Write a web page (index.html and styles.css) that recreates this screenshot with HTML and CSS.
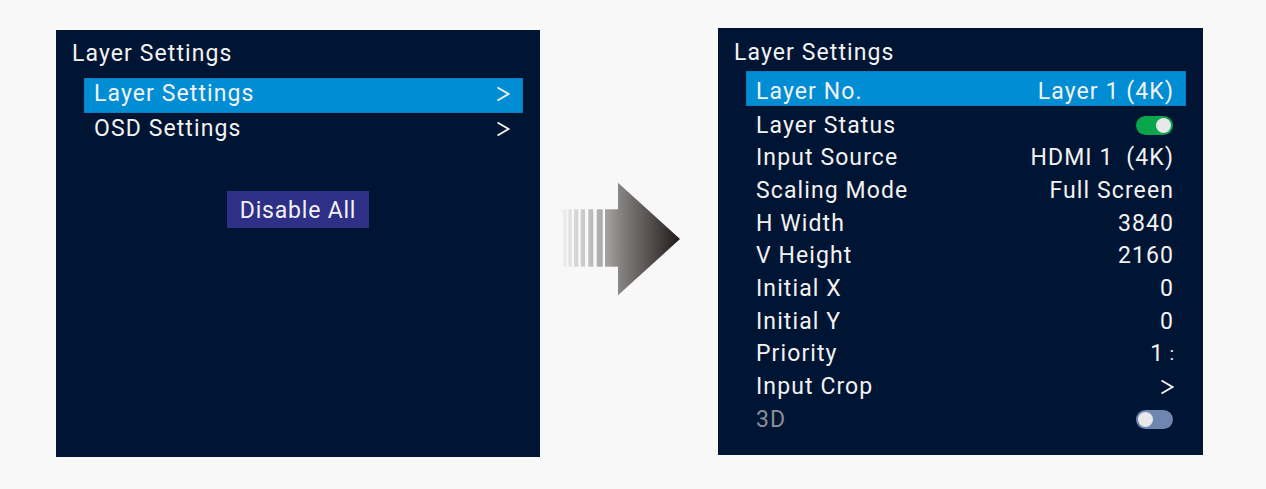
FILE: index.html
```html
<!DOCTYPE html>
<html lang="en">
<head>
<meta charset="utf-8">
<title>Layer Settings</title>
<link rel="stylesheet" href="styles.css">
</head>
<body>
<div class="stage">
  <section class="panel panel-left">
    <div class="title">Layer Settings</div>
    <ul class="menu">
      <li class="mrow active"><span>Layer Settings</span><svg class="chev" viewBox="0 0 14 16"><polyline points="1.5,1.5 12.5,8 1.5,14.5"/></svg></li>
      <li class="mrow"><span>OSD Settings</span><svg class="chev" viewBox="0 0 14 16"><polyline points="1.5,1.5 12.5,8 1.5,14.5"/></svg></li>
    </ul>
    <div class="btn">Disable All</div>
  </section>

  <svg class="arrow" width="118" height="114" viewBox="0 0 118 114">
    <defs>
      <linearGradient id="ag" x1="0" y1="0" x2="118" y2="0" gradientUnits="userSpaceOnUse">
        <stop offset="0" stop-color="#f0f0f0"/>
        <stop offset="0.35" stop-color="#a8a6a6"/>
        <stop offset="0.5" stop-color="#858181"/>
        <stop offset="1" stop-color="#221a1a"/>
      </linearGradient>
    </defs>
    <g fill="url(#ag)">
      <rect x="0.7" y="27.3" width="4" height="57.4"/>
      <rect x="6.3" y="27.3" width="3.4" height="57.4"/>
      <rect x="12" y="27.3" width="4.3" height="57.4"/>
      <rect x="18.7" y="27.3" width="4.3" height="57.4"/>
      <rect x="26.3" y="27.3" width="5" height="57.4"/>
      <rect x="34.7" y="27.3" width="6" height="57.4"/>
      <rect x="43" y="27.3" width="14" height="57.4"/>
      <polygon points="56,0.7 118,57 56,113.3"/>
    </g>
  </svg>

  <section class="panel panel-right">
    <div class="title">Layer Settings</div>
    <ul class="list">
      <li class="row active"><span>Layer No.</span><span>Layer 1 (4K)</span></li>
      <li class="row"><span>Layer Status</span><span class="toggle on"></span></li>
      <li class="row"><span>Input Source</span><span>HDMI 1&ensp;(4K)</span></li>
      <li class="row"><span>Scaling Mode</span><span>Full Screen</span></li>
      <li class="row"><span>H Width</span><span>3840</span></li>
      <li class="row"><span>V Height</span><span>2160</span></li>
      <li class="row"><span>Initial X</span><span>0</span></li>
      <li class="row"><span>Initial Y</span><span>0</span></li>
      <li class="row"><span>Priority</span><span>1<span class="dots">:</span></span></li>
      <li class="row"><span>Input Crop</span><svg class="chev" viewBox="0 0 14 16"><polyline points="1.5,1.5 12.5,8 1.5,14.5"/></svg></li>
      <li class="row disabled"><span>3D</span><span class="toggle off"></span></li>
    </ul>
  </section>
</div>
</body>
</html>
```

FILE: styles.css
```css
* { box-sizing: border-box; }
html, body { margin: 0; padding: 0; }
body {
  background: #f8f8f8;
  width: 1266px;
  height: 489px;
  overflow: hidden;
  font-family: Roboto, "Noto Sans", "Liberation Sans", sans-serif;
  color: #f2f2f2;
}
.stage {
  display: flex;
  align-items: flex-start;
  padding: 28px 0 0 56px;
}
.panel {
  background: #001433;
  height: 427px;
  font-size: 23px;
  letter-spacing: 1.1px;
  display: flex;
  flex-direction: column;
}
.panel-left {
  width: 484px;
  margin-top: 2px;
  padding: 9px 0 0 16px;
}
.panel-right {
  width: 485px;
  margin-left: 38px;
  padding: 9.5px 0 0 16px;
}
.title {
  line-height: 30px;
  height: 30px;
  white-space: nowrap;
}
ul { list-style: none; margin: 0; padding: 0; }

.menu {
  margin: 9px 0 0 12px;
  width: 439px;
}
.mrow {
  height: 35px;
  line-height: 32px;
  padding: 0 13px 3px 10px;
  display: flex;
  justify-content: space-between;
  align-items: center;
}
.mrow.active { background: #008dd3; box-shadow: inset 0 0 0 1px #0a7cc0; }
.chev {
  width: 14px;
  height: 16px;
  fill: none;
  stroke: #f2f2f2;
  stroke-width: 1.8;
  flex: none;
}
.btn {
  align-self: center;
  margin: 43px 0 0 -16px;
  width: 142px;
  height: 37px;
  line-height: 35px;
  padding-top: 2px;
  text-align: center;
  background: #2e2f86;
  letter-spacing: 0.8px;
}

.arrow {
  flex: none;
  margin: 154px 0 0 22px;
}

.list {
  margin: 3.5px 0 0 12px;
  width: 440px;
}
.row {
  height: 32.7px;
  padding: 5.5px 12px 0 10px;
  line-height: 27.2px;
  display: flex;
  justify-content: space-between;
  align-items: center;
  white-space: nowrap;
}
.row.active {
  height: 35px;
  padding-top: 6px;
  line-height: 29px;
  background: #008dd3;
  box-shadow: inset 0 0 0 1px #0a7cc0;
}
.row.disabled { color: #8a8e98; }
.dots {
  font-size: 19px;
  margin-left: 5px;
  letter-spacing: 0;
  position: relative;
  top: -1px;
}
.toggle {
  position: relative;
  width: 37px;
  height: 19px;
  border-radius: 10px;
  margin-right: 1px;
}
.toggle::after {
  content: "";
  position: absolute;
  top: 2px;
  width: 15px;
  height: 15px;
  border-radius: 50%;
  background: #e8e8ea;
}
.toggle.on { background: #0aa64b; }
.toggle.on::after { right: 2px; }
.toggle.off { background: #6f87b0; }
.toggle.off::after { left: 2px; }
```
